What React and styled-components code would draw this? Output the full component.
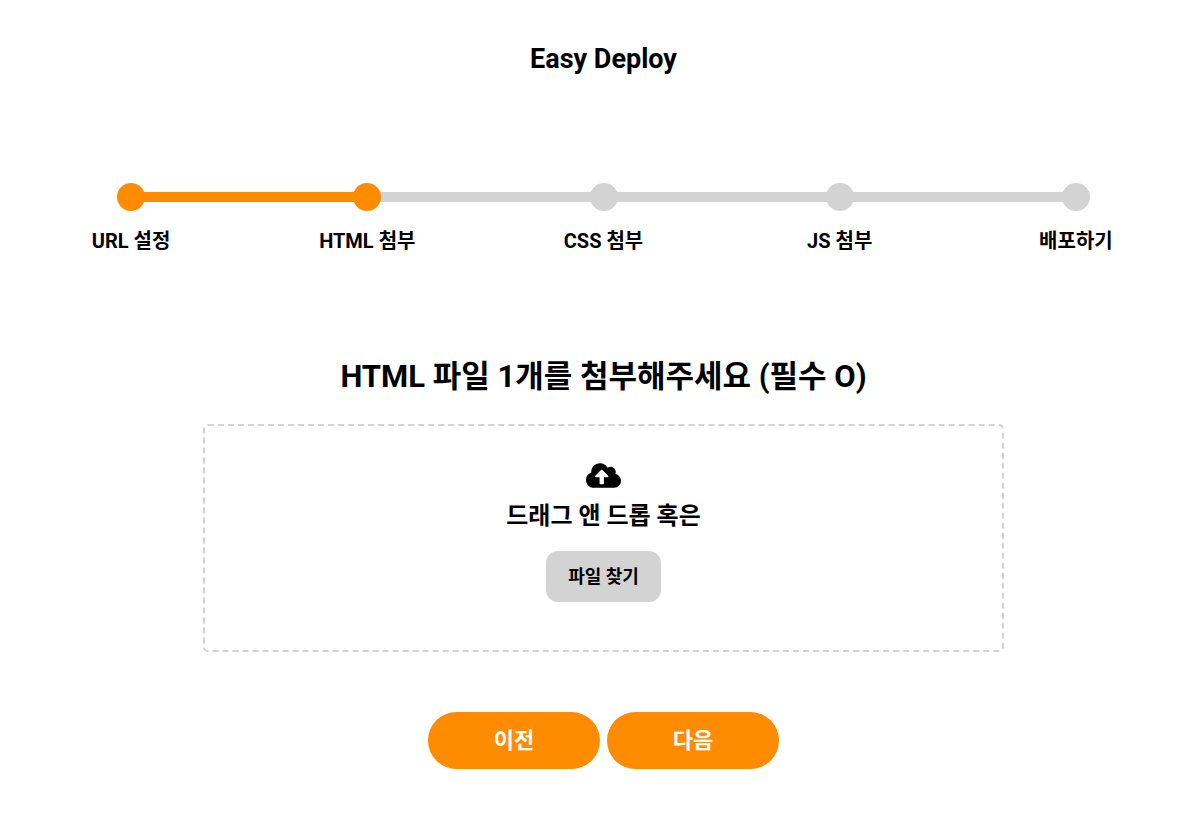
import { useRef, useState } from "react";
import { FaCloudUploadAlt } from "react-icons/fa";
import styled, { createGlobalStyle } from "styled-components";

const GlobalStyle = createGlobalStyle`
  * {
    box-sizing: border-box;
  }

  body {
    margin: 0;
    background: #fff;
    color: #000;
    font-family: Roboto, "Noto Sans CJK KR", sans-serif;
    font-weight: 700;
  }

  button {
    font-family: inherit;
    font-weight: 700;
    border: none;
    cursor: pointer;
  }
`;

const Container = styled.div`
  display: flex;
  flex-direction: column;
  align-items: center;
  padding: 39px 6px 44px 13px;
`;

const Logo = styled.h1`
  margin: 0;
  font-size: 27px;
  line-height: 40px;
`;

const StepList = styled.ol`
  display: flex;
  width: 100%;
  margin: 104px 0 0;
  padding: 0;
  list-style: none;
`;

const Step = styled.li`
  flex: 1;
  text-align: center;
`;

const Track = styled.div`
  display: flex;
  align-items: center;
`;

const Line = styled.span`
  flex: 1;
  height: 10px;
  background: ${({ $active }) => ($active ? "#ff8c00" : "#d3d3d3")};
  visibility: ${({ $hidden }) => ($hidden ? "hidden" : "visible")};
`;

const Dot = styled.span`
  position: relative;
  width: 28px;
  height: 28px;
  margin: 0 -2px;
  border-radius: 50%;
  background: ${({ $active }) => ($active ? "#ff8c00" : "#d3d3d3")};
`;

const StepName = styled.span`
  display: block;
  margin-top: 16px;
  font-size: 20px;
  line-height: 28px;
  word-break: keep-all;
`;

const Heading = styled.h2`
  margin: 98px 0 23px;
  font-size: 31px;
  line-height: 48px;
  text-align: center;
`;

const DropZone = styled.div`
  display: flex;
  flex-direction: column;
  align-items: center;
  width: 100%;
  max-width: 801px;
  padding: 32px 20px 48px;
  border: 2px dashed #d3d3d3;
  border-radius: 5px;
`;

const UploadIcon = styled(FaCloudUploadAlt)`
  font-size: 35px;
`;

const DropText = styled.p`
  margin: 3px 0 15px;
  font-size: 24px;
  line-height: 40px;
`;

const FileButton = styled.button`
  padding: 12px 22px;
  border-radius: 12px;
  background: #d3d3d3;
  color: #000;
  font-size: 18px;
  line-height: 27px;
`;

const ButtonWrap = styled.div`
  display: flex;
  gap: 7px;
  margin-top: 60px;
`;

const NavButton = styled.button`
  min-width: 172px;
  padding: 14px 20px;
  border-radius: 30px;
  background: #ff8c00;
  color: #fff;
  font-size: 22px;
  line-height: 29px;
`;

const steps = ["URL 설정", "HTML 첨부", "CSS 첨부", "JS 첨부", "배포하기"];

const App = () => {
  const [current, setCurrent] = useState(1);
  const fileInput = useRef(null);

  return (
    <>
      <GlobalStyle />
      <Container>
        <Logo>Easy Deploy</Logo>
        <StepList>
          {steps.map((name, index) => (
            <Step key={name}>
              <Track>
                <Line $active={index <= current} $hidden={index === 0} />
                <Dot $active={index <= current} />
                <Line
                  $active={index < current}
                  $hidden={index === steps.length - 1}
                />
              </Track>
              <StepName>{name}</StepName>
            </Step>
          ))}
        </StepList>
        <Heading>HTML 파일 1개를 첨부해주세요 (필수 O)</Heading>
        <DropZone>
          <UploadIcon />
          <DropText>드래그 앤 드롭 혹은</DropText>
          <FileButton type="button" onClick={() => fileInput.current.click()}>
            파일 찾기
          </FileButton>
          <input ref={fileInput} type="file" accept=".html" hidden />
        </DropZone>
        <ButtonWrap>
          <NavButton
            type="button"
            onClick={() => setCurrent(Math.max(current - 1, 0))}
          >
            이전
          </NavButton>
          <NavButton
            type="button"
            onClick={() => setCurrent(Math.min(current + 1, steps.length - 1))}
          >
            다음
          </NavButton>
        </ButtonWrap>
      </Container>
    </>
  );
};

export default App;
